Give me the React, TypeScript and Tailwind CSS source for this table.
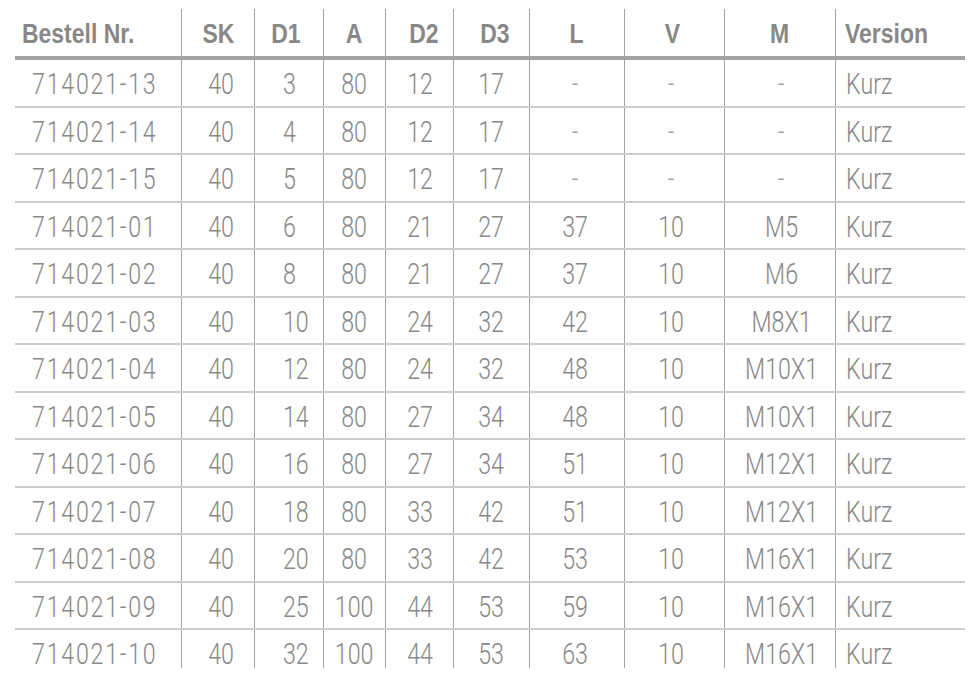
import React from 'react';

type Col = {
  key: string;
  label: string;
  head: string;
  cell: string;
  left?: boolean;
  headLeft?: boolean;
};

const cols: Col[] = [
  { key: 'nr', label: 'Bestell Nr.', head: 'text-left pl-[7px]', cell: 'text-left pl-[17px] tracking-[2.2px]', left: true, headLeft: true },
  { key: 'sk', label: 'SK', head: 'text-center', cell: 'text-center pl-[6px]' },
  { key: 'd1', label: 'D1', head: 'text-center pr-[7px]', cell: 'text-left pl-[28px]', left: true },
  { key: 'a', label: 'A', head: 'text-center', cell: 'text-center' },
  { key: 'd2', label: 'D2', head: 'text-center pl-[8px]', cell: 'text-center pl-[2px]' },
  { key: 'd3', label: 'D3', head: 'text-center pl-[6px]', cell: 'text-center' },
  { key: 'l', label: 'L', head: 'text-center', cell: 'text-center pr-[3px]' },
  { key: 'v', label: 'V', head: 'text-center pr-[4px]', cell: 'text-center pr-[7px]' },
  { key: 'm', label: 'M', head: 'text-center', cell: 'text-center pl-[3px]' },
  { key: 'version', label: 'Version', head: 'text-left pl-[9px]', cell: 'text-left pl-[10px]', left: true, headLeft: true },
];

const rows: string[][] = [
  ['714021-13', '40', '3', '80', '12', '17', '-', '-', '-', 'Kurz'],
  ['714021-14', '40', '4', '80', '12', '17', '-', '-', '-', 'Kurz'],
  ['714021-15', '40', '5', '80', '12', '17', '-', '-', '-', 'Kurz'],
  ['714021-01', '40', '6', '80', '21', '27', '37', '10', 'M5', 'Kurz'],
  ['714021-02', '40', '8', '80', '21', '27', '37', '10', 'M6', 'Kurz'],
  ['714021-03', '40', '10', '80', '24', '32', '42', '10', 'M8X1', 'Kurz'],
  ['714021-04', '40', '12', '80', '24', '32', '48', '10', 'M10X1', 'Kurz'],
  ['714021-05', '40', '14', '80', '27', '34', '48', '10', 'M10X1', 'Kurz'],
  ['714021-06', '40', '16', '80', '27', '34', '51', '10', 'M12X1', 'Kurz'],
  ['714021-07', '40', '18', '80', '33', '42', '51', '10', 'M12X1', 'Kurz'],
  ['714021-08', '40', '20', '80', '33', '42', '53', '10', 'M16X1', 'Kurz'],
  ['714021-09', '40', '25', '100', '44', '53', '59', '10', 'M16X1', 'Kurz'],
  ['714021-10', '40', '32', '100', '44', '53', '63', '10', 'M16X1', 'Kurz'],
];

const grid =
  'grid grid-cols-[166px_73px_69px_62px_68px_76px_95px_100px_111px_130px]';

// no condensed face installed, so the regular faces get squeezed horizontally
const headFont = { fontFamily: '"Liberation Sans", Arial, sans-serif' };
const bodyFont = { fontFamily: 'Roboto, "Liberation Sans", sans-serif' };

export default function App() {
  return (
    <div className="min-h-screen bg-white pl-[15px] pt-[9px]">
      <div className="w-[950px]">
        {/* Header */}
        <div className={`${grid} h-[51px] border-b-4 border-[#a4a4a4]`} style={headFont}>
          {cols.map((c, i) => (
            <div
              key={c.key}
              className={`whitespace-nowrap pt-[11px] text-[28px] leading-[28px] font-bold text-[#888888] ${
                i > 0 ? 'border-l border-[#a3a3a3]' : ''
              } ${c.head}`}
            >
              <span
                className={`inline-block scale-x-[0.82] ${
                  c.headLeft ? 'origin-left' : 'origin-center'
                }`}
              >
                {c.label}
              </span>
            </div>
          ))}
        </div>

        {/* Body */}
        {rows.map((r, ri) => {
          const last = ri === rows.length - 1;
          return (
            <div
              key={r[0]}
              style={bodyFont}
              className={`${grid} ${
                last ? 'h-[38px]' : 'h-[47.5px] border-b-2 border-[#cdcdcd]'
              }`}
            >
              {r.map((v, ci) => (
                <div
                  key={cols[ci].key}
                  className={`whitespace-nowrap pt-[10px] text-[29px] leading-[28px] font-light ${
                    v === '-' ? 'text-[#a6a6a6]' : 'text-[#888888]'
                  } ${ci > 0 ? 'border-l border-[#a3a3a3]' : ''} ${cols[ci].cell}`}
                >
                  <span
                    className={`inline-block scale-x-[0.8] ${
                      cols[ci].left ? 'origin-left' : 'origin-center'
                    }`}
                  >
                    {v}
                  </span>
                </div>
              ))}
            </div>
          );
        })}
      </div>
    </div>
  );
}
